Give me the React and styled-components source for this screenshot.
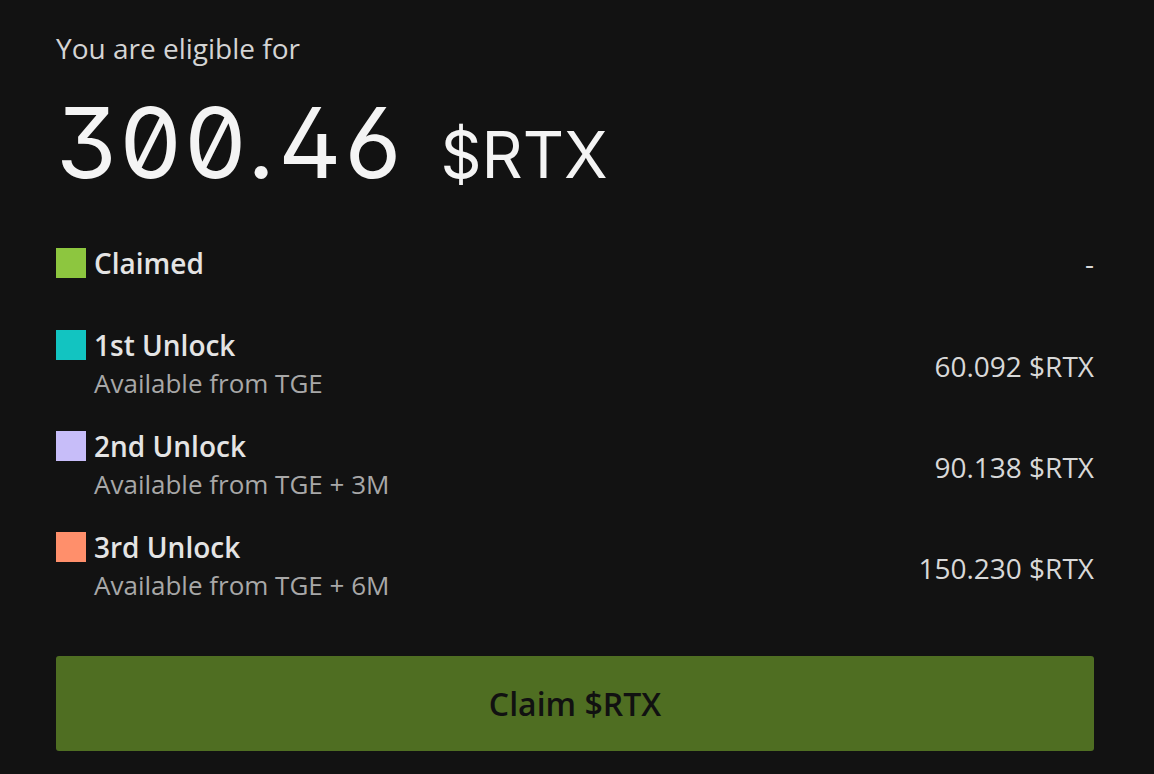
import React from "react";
import styled, { createGlobalStyle } from "styled-components";

const Global = createGlobalStyle`
	body {
		margin: 0;
		background: #121212;
		font-family: "Open Sans", "Noto Sans", sans-serif;
	}
`;

const Page = styled.main`
	padding: 28px 60px 0 56px;
	min-height: 774px;
	box-sizing: border-box;
	background: #121212;
	color: #e6e6e6;
`;

const Lead = styled.p`
	margin: 0;
	font-size: 28px;
	line-height: 40px;
	color: #d4d4d4;
`;

const Amount = styled.h1`
	margin: 26px 0 0;
	display: flex;
	align-items: baseline;
	gap: 36px;
	font-family: Inter, sans-serif;
	font-weight: 400;
	color: #f4f4f4;
	line-height: 1;
	.num {
		font-size: 98px;
		font-variant-numeric: slashed-zero;
		font-feature-settings: "zero" 1, "cv09" 1, "cv02" 1, "cv03" 1;
		letter-spacing: 3px;
	}
	.unit {
		font-size: 64px;
	}
`;

const List = styled.div`
	margin-top: 52px;
	display: flex;
	flex-direction: column;
`;

const Row = styled.div`
	display: flex;
	justify-content: space-between;
	align-items: center;
	margin-bottom: ${(p) => p.$gap}px;
`;

const Label = styled.div`
	display: grid;
	grid-template-columns: 30px 1fr;
	column-gap: 8px;
`;

const Swatch = styled.span`
	width: 30px;
	height: 30px;
	margin-top: 2px;
	background: ${(p) => p.$color};
`;

const Title = styled.span`
	font-size: 28px;
	font-weight: 600;
	line-height: 34px;
	color: #e4e4e4;
`;

const Sub = styled.span`
	grid-column: 2;
	font-size: 26px;
	line-height: 42px;
	color: #a8a8a8;
`;

const Value = styled.span`
	font-size: 28px;
	color: #d8d8d8;
`;

const ClaimButton = styled.button`
	margin-top: 50px;
	width: 100%;
	height: 95px;
	border: none;
	border-radius: 3px;
	background: #4f6e22;
	color: #111;
	font-family: "Open Sans", sans-serif;
	font-size: 32px;
	font-weight: 600;
	cursor: pointer;
`;

const rows = [
	{ title: "Claimed", color: "#8dc63f", value: "-", gap: 46 },
	{ title: "1st Unlock", sub: "Available from TGE", color: "#12c4c1", value: "60.092 $RTX", gap: 25 },
	{ title: "2nd Unlock", sub: "Available from TGE + 3M", color: "#c7bdf9", value: "90.138 $RTX", gap: 25 },
	{ title: "3rd Unlock", sub: "Available from TGE + 6M", color: "#ff8f6b", value: "150.230 $RTX", gap: 0 },
];

const App = () => {
	return (
		<Page>
			<Global />
			<Lead>You are eligible for</Lead>
			<Amount>
				<span className='num'>300.46</span>
				<span className='unit'>$RTX</span>
			</Amount>
			<List>
				{rows.map((r) => (
					<Row key={r.title} $gap={r.gap}>
						<Label>
							<Swatch $color={r.color} />
							<Title>{r.title}</Title>
							{r.sub && <Sub>{r.sub}</Sub>}
						</Label>
						<Value>{r.value}</Value>
					</Row>
				))}
			</List>
			<ClaimButton>Claim $RTX</ClaimButton>
		</Page>
	);
};

export default App;
